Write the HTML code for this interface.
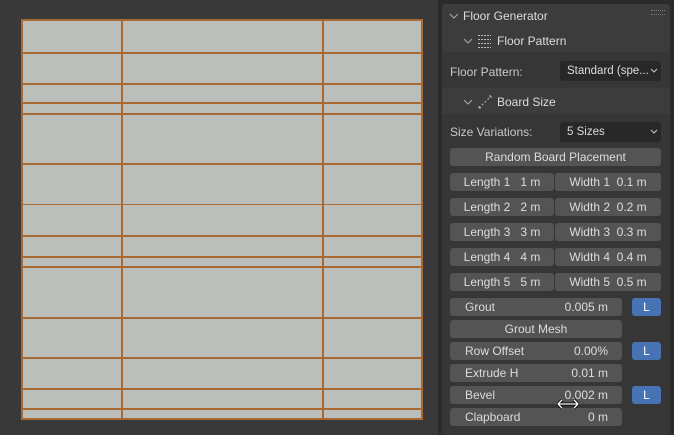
<!DOCTYPE html><html><head><style>
body{margin:0;width:674px;height:435px;background:#2b2b2b;position:relative;overflow:hidden;font-family:"Liberation Sans",sans-serif;font-size:12px;color:#dcdcdc}
.a{position:absolute;box-sizing:border-box;white-space:nowrap}
.b{background:#545454;border-radius:3px;display:flex;align-items:center;justify-content:center;height:18px}
.f{justify-content:space-between;padding:0 14px 0 15px}
.L{background:#4772b3;color:#fff;width:29px;left:632px}
.h{position:absolute;height:2px;left:21px;width:402px;background:#a86a32}
.v{position:absolute;width:2px;top:19px;height:401px;background:#a86a32}
.d{background:#282828;border-radius:3px;height:20px;display:flex;align-items:center;padding:0 3px 0 7px;justify-content:space-between;font-size:11.5px}
</style></head><body>
<div class="a" style="left:0;top:0;width:438px;height:435px;background:#393939"></div>
<div class="a" style="left:21px;top:19px;width:402px;height:401px;background:#bcbebc;border:2px solid #a86a32"></div>
<div class="v" style="left:121px"></div><div class="v" style="left:322px"></div>
<div class="h" style="top:52px"></div><div class="h" style="top:83px"></div><div class="h" style="top:102px"></div><div class="h" style="top:113px"></div><div class="h" style="top:163px"></div><div class="h" style="top:204px;height:1px"></div><div class="h" style="top:235px"></div><div class="h" style="top:256px"></div><div class="h" style="top:266px"></div><div class="h" style="top:317px"></div><div class="h" style="top:357px"></div><div class="h" style="top:388px"></div><div class="h" style="top:408px"></div>
<div class="a" style="left:442px;top:4px;width:228px;height:431px;background:#363636;border-radius:4px"></div>
<div class="a" style="left:442px;top:4px;width:228px;height:48px;background:#3c3c3c;border-radius:4px 4px 0 0"></div>
<div class="a" style="left:442px;top:88px;width:228px;height:26px;background:#3c3c3c"></div>
<svg class="a" style="left:449px;top:12px" width="10" height="8"><path d="M1 2l4 4 4-4" stroke="#aaa" fill="none"/></svg>
<div class="a" style="left:463px;top:9px">Floor Generator</div>
<div class="a" style="left:651px;top:10px;width:14px;height:5px;border-top:1px dotted #777;border-bottom:1px dotted #777"></div>
<svg class="a" style="left:463px;top:37px" width="10" height="8"><path d="M1 2l4 4 4-4" stroke="#aaa" fill="none"/></svg>
<svg class="a" style="left:477px;top:34px" width="15" height="14"><path d="M1 1.5h13M1 5.5h13M1 9.5h13M1 13.5h13" stroke="#bbb" stroke-dasharray="2 1"/></svg>
<div class="a" style="left:497px;top:34px">Floor Pattern</div>
<div class="a" style="left:450px;top:65px;color:#c8c8c8">Floor Pattern:</div>
<div class="a d" style="left:560px;top:61px;width:101px"><span>Standard (spe...</span><svg width="8" height="6"><path d="M1 1l3 3 3-3" stroke="#ccc" fill="none"/></svg></div>
<svg class="a" style="left:463px;top:98px" width="10" height="8"><path d="M1 2l4 4 4-4" stroke="#aaa" fill="none"/></svg>
<svg class="a" style="left:477px;top:94px" width="16" height="16"><path d="M2 14L14 2M2 14l0-3M2 14h3M14 2h-3M14 2v3" stroke="#bbb" stroke-dasharray="2 2" fill="none"/></svg>
<div class="a" style="left:497px;top:95px">Board Size</div>
<div class="a" style="left:450px;top:125px;color:#c8c8c8">Size Variations:</div>
<div class="a d" style="left:560px;top:122px;width:101px"><span>5 Sizes</span><svg width="8" height="6"><path d="M1 1l3 3 3-3" stroke="#ccc" fill="none"/></svg></div>
<div class="a b" style="left:450px;top:148px;width:211px">Random Board Placement</div>
<div class="a" style="left:450px;top:173px;width:211px">
<div class="b" style="position:absolute;left:0;width:104px;top:0">Length 1&nbsp;&nbsp; 1 m</div><div class="b" style="position:absolute;left:105px;width:106px;top:0">Width 1&nbsp; 0.1 m</div>
<div class="b" style="position:absolute;left:0;width:104px;top:25px">Length 2&nbsp;&nbsp; 2 m</div><div class="b" style="position:absolute;left:105px;width:106px;top:25px">Width 2&nbsp; 0.2 m</div>
<div class="b" style="position:absolute;left:0;width:104px;top:50px">Length 3&nbsp;&nbsp; 3 m</div><div class="b" style="position:absolute;left:105px;width:106px;top:50px">Width 3&nbsp; 0.3 m</div>
<div class="b" style="position:absolute;left:0;width:104px;top:75px">Length 4&nbsp;&nbsp; 4 m</div><div class="b" style="position:absolute;left:105px;width:106px;top:75px">Width 4&nbsp; 0.4 m</div>
<div class="b" style="position:absolute;left:0;width:104px;top:100px">Length 5&nbsp;&nbsp; 5 m</div><div class="b" style="position:absolute;left:105px;width:106px;top:100px">Width 5&nbsp; 0.5 m</div>
</div>
<div class="a b f" style="left:450px;top:298px;width:172px"><span>Grout</span><span>0.005 m</span></div><div class="a b L" style="top:298px">L</div>
<div class="a b" style="left:450px;top:320px;width:172px">Grout Mesh</div>
<div class="a b f" style="left:450px;top:342px;width:172px"><span>Row Offset</span><span>0.00%</span></div><div class="a b L" style="top:342px">L</div>
<div class="a b f" style="left:450px;top:364px;width:172px"><span>Extrude H</span><span>0.01 m</span></div>
<div class="a b f" style="left:450px;top:386px;width:172px"><span>Bevel</span><span>0.002 m</span></div><div class="a b L" style="top:386px">L</div>
<div class="a b f" style="left:450px;top:408px;width:172px"><span>Clapboard</span><span>0 m</span></div>
<svg class="a" style="left:556px;top:398px" width="24" height="12"><path d="M2 6h20M2 6l4-4M2 6l4 4M22 6l-4-4M22 6l-4 4" stroke="#000" stroke-width="3" fill="none"/><path d="M2 6h20M2 6l4-4M2 6l4 4M22 6l-4-4M22 6l-4 4" stroke="#fff" stroke-width="1.3" fill="none"/></svg>
</body></html>
